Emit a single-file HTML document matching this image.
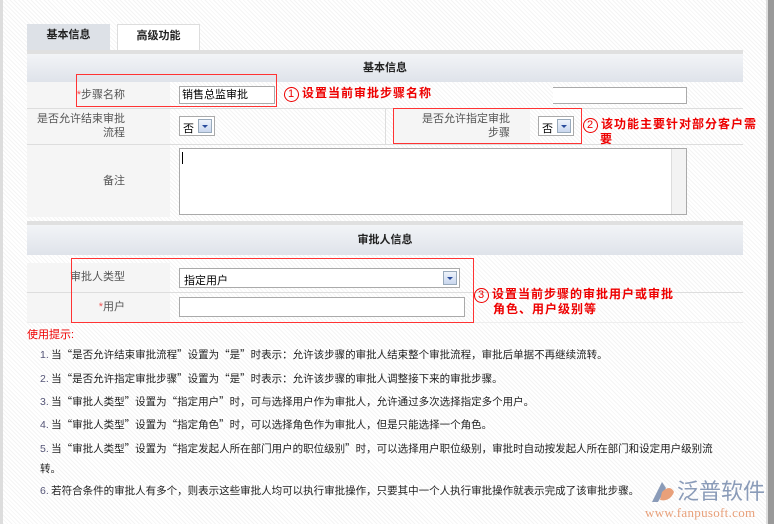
<!DOCTYPE html>
<html><head><meta charset="utf-8"><style>
*{margin:0;padding:0;box-sizing:border-box}
body{width:774px;height:524px;overflow:hidden;position:relative;font-family:"Liberation Sans","Noto Sans CJK SC",sans-serif;font-size:11px;color:#333;
background:repeating-linear-gradient(45deg,#fff 0 2px,#f4f4f4 2px 3px)}
.a{position:absolute;white-space:nowrap}
.hdr{left:27px;width:716px;background:linear-gradient(#f2f4f7,#dfe3ea);border-top:4px solid #e0e0e0;text-align:center;font-weight:bold;color:#222;font-size:11px}
.lab{background:#f5f5f5;text-align:right;color:#555}
.line{left:27px;width:716px;height:1px;background:#ddd}
.inp{background:#fff;border:1px solid #aaa}
.sel .btn{position:absolute;right:2px;top:2px;width:14px;height:14px;background:linear-gradient(#eef3fb,#c9d7ee);border:1px solid #9ab}
.sel .btn:after{content:"";position:absolute;left:3px;top:5px;border-left:3px solid transparent;border-right:3px solid transparent;border-top:3px solid #2a4c9c}
.red{border:1px solid #f33}
.ann{color:#e00;font-weight:bold;font-size:12px;letter-spacing:1px}
.circ{display:inline-block;width:15px;height:15px;border:1px solid #e00;border-radius:50%;text-align:center;line-height:13px;font-size:11px;font-weight:normal;margin-right:3px}
.tip{left:40px;color:#222;font-size:10.5px;font-family:"Noto Sans CJK SC",sans-serif}
.tip b{font-weight:normal;color:#557;font-family:"Liberation Sans",sans-serif}
</style></head><body>
<div class="a" style="left:0;top:0;width:3px;height:524px;background:#ddd"></div>
<div class="a" style="left:768px;top:0;width:6px;height:524px;background:#999"></div>
<div class="a" style="left:766px;top:0;width:2px;height:524px;background:#ddd"></div>
<div class="a" style="left:27px;top:24px;width:83px;height:26px;background:#dde1e7;font-weight:bold;text-align:center;line-height:22px;color:#222">基本信息</div>
<div class="a" style="left:117px;top:24px;width:83px;height:26px;background:#fff;border:1px solid #ddd;border-bottom:none;font-weight:bold;text-align:center;line-height:22px;color:#222">高级功能</div>
<div class="a hdr" style="top:50px;height:32px;line-height:28px">基本信息</div>
<div class="a lab" style="left:27px;top:82px;width:143px;height:26px;line-height:26px;padding-right:45px"><span style="color:#e55">*</span>步骤名称</div>
<div class="a inp" style="left:179px;top:86px;width:96px;height:18px;padding-left:2px;line-height:16px;color:#000">销售总监审批</div>
<div class="a inp" style="left:553px;top:87px;width:134px;height:17px;border-left:none"></div>
<div class="a line" style="top:108px"></div>
<div class="a lab" style="left:27px;top:109px;width:143px;height:35px;padding:3px 45px 0 0;line-height:14px">是否允许结束审批<br>流程</div>
<div class="a inp sel" style="left:179px;top:116px;width:36px;height:20px;padding:3px 0 0 3px;color:#000">否<span class="btn"></span></div>
<div class="a" style="left:385px;top:109px;width:1px;height:35px;background:#ddd"></div>
<div class="a lab" style="left:394px;top:109px;width:136px;height:34px;padding:3px 20px 0 0;line-height:14px;text-align:right">是否允许指定审批<br>步骤</div>
<div class="a inp sel" style="left:538px;top:116px;width:36px;height:20px;padding:3px 0 0 3px;color:#000">否<span class="btn"></span></div>
<div class="a line" style="top:144px"></div>
<div class="a lab" style="left:27px;top:145px;width:143px;height:72px;line-height:72px;padding-right:45px">备注</div>
<div class="a inp" style="left:179px;top:148px;width:508px;height:67px"><div style="position:absolute;left:2px;top:3px;width:1px;height:12px;background:#000"></div><div style="position:absolute;right:0;top:0;width:15px;height:65px;background:#f3f3f3;border-left:1px solid #ddd"></div></div>
<div class="a hdr" style="top:221px;height:34px;line-height:30px">审批人信息</div>
<div class="a lab" style="left:27px;top:263px;width:143px;height:29px;line-height:29px;padding-right:45px">审批人类型</div>
<div class="a inp sel" style="left:179px;top:268px;width:281px;height:20px;padding:3px 0 0 4px;color:#000">指定用户<span class="btn"></span></div>
<div class="a line" style="top:292px"></div>
<div class="a lab" style="left:27px;top:293px;width:143px;height:29px;line-height:29px;padding-right:45px"><span style="color:#e55">*</span>用户</div>
<div class="a inp" style="left:179px;top:297px;width:286px;height:20px"></div>
<div class="a line" style="top:322px;background:#eee"></div>
<div class="a red" style="left:76px;top:74px;width:201px;height:33px"></div>
<div class="a red" style="left:393px;top:108px;width:189px;height:36px"></div>
<div class="a red" style="left:71px;top:258px;width:403px;height:65px"></div>
<div class="a ann" style="left:284px;top:84px"><span class="circ">1</span>设置当前审批步骤名称</div>
<div class="a ann" style="left:583px;top:118px;line-height:13px"><span class="circ">2</span>该功能主要针对部分客户需<br><span style="padding-left:17px">要</span></div>
<div class="a ann" style="left:474px;top:288px;line-height:13px"><span class="circ">3</span>设置当前步骤的审批用户或审批<br><span style="padding-left:19px">角色、用户级别等</span></div>
<div class="a" style="left:27px;top:326px;color:#e00;font-size:11px">使用提示:</div>
<div class="a tip" style="top:347px"><b>1.</b> 当“是否允许结束审批流程”设置为“是”时表示：允许该步骤的审批人结束整个审批流程，审批后单据不再继续流转。</div>
<div class="a tip" style="top:371px"><b>2.</b> 当“是否允许指定审批步骤”设置为“是”时表示：允许该步骤的审批人调整接下来的审批步骤。</div>
<div class="a tip" style="top:394px"><b>3.</b> 当“审批人类型”设置为“指定用户”时，可与选择用户作为审批人，允许通过多次选择指定多个用户。</div>
<div class="a tip" style="top:417px"><b>4.</b> 当“审批人类型”设置为“指定角色”时，可以选择角色作为审批人，但是只能选择一个角色。</div>
<div class="a tip" style="top:439px;line-height:20px"><b>5.</b> 当“审批人类型”设置为“指定发起人所在部门用户的职位级别”时，可以选择用户职位级别，审批时自动按发起人所在部门和设定用户级别流<br>转。</div>
<div class="a tip" style="top:483px"><b>6.</b> 若符合条件的审批人有多个，则表示这些审批人均可以执行审批操作，只要其中一个人执行审批操作就表示完成了该审批步骤。</div>
<svg class="a" style="left:648px;top:478px" width="28" height="26" viewBox="0 0 28 26"><path d="M4 24 L14 4 L18 10 L10 24Z" fill="#8a9bb8"/><path d="M14 14 Q22 6 26 14 Q22 24 12 22Z" fill="#e8a07a"/></svg>
<div class="a" style="left:677px;top:476px;font-family:'Noto Sans CJK SC',sans-serif;font-size:22px;color:#8a9bb8;line-height:28px">泛普软件</div>
<div class="a" style="left:645px;top:505px;font-family:'Liberation Serif',serif;font-size:13px;color:#e8a07a;letter-spacing:0.3px">www.fanpusoft.com</div>
</body></html>
